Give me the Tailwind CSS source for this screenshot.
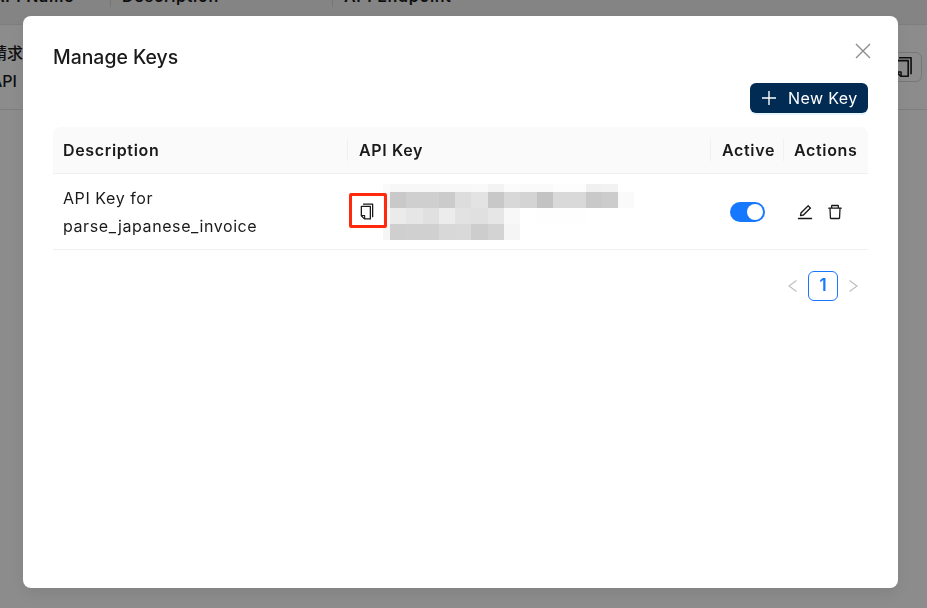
<!DOCTYPE html>
<html lang="en">
<head>
    <meta charset="UTF-8">
    <title>Manage Keys</title>
    <script src="https://cdn.jsdelivr.net/npm/@tailwindcss/browser@4"></script>
</head>
<body class="bg-white font-['Inter','Noto_Sans_CJK_JP',sans-serif] text-[#1a1a1a] overflow-hidden">
    <!-- page behind the dialog -->
    <div class="h-[608px] overflow-hidden">
        <div class="flex items-center h-[58px] -mt-[33px] bg-[#f0f0f0] border-b border-[#e6e6e6] font-semibold text-base tracking-[0.7px]">
            <div class="w-[117px] shrink-0 -ml-[7px] whitespace-nowrap">API Name</div>
            <div class="w-px h-[22px] bg-[#d8d8d8]"></div>
            <div class="w-[221px] shrink-0 pl-[11px]">Description</div>
            <div class="w-px h-[22px] bg-[#d8d8d8]"></div>
            <div class="pl-[11px]">API Endpoint</div>
        </div>
        <div class="flex justify-between items-center h-[85px] border-b border-[#e6e6e6] text-base font-medium">
            <div class="-ml-[9px] leading-[28px]">
                <p>請求</p>
                <p>API</p>
            </div>
            <button class="w-[34px] h-[30px] mr-[5px] border border-[#d9d9d9] rounded-md flex items-center pl-[5px]">
                <svg class="w-[20px] h-[20px]" viewBox="64 64 896 896" fill="currentColor"><path d="M832 64H296c-4.400 0-8 3.600-8 8v56c0 4.400 3.600 8 8 8h496v688c0 4.400 3.600 8 8 8h56c4.400 0 8-3.600 8-8V96c0-17.700-14.300-32-32-32zM704 192H192c-17.700 0-32 14.300-32 32v530.700c0 8.500 3.400 16.600 9.400 22.600l173.300 173.300c2.200 2.200 4.700 4 7.400 5.500v1.900h4.200c3.500 1.300 7.200 2 11 2H704c17.700 0 32-14.300 32-32V224c0-17.700-14.300-32-32-32zM350 856.200L263.900 770H350v86.200zM664 888H414V746c0-22.100-17.900-40-40-40H232V264h432v624z"/></svg>
            </button>
        </div>
    </div>

    <!-- mask + dialog -->
    <div class="fixed inset-0 bg-black/45 flex justify-center items-start pt-4 pr-[6px]">
        <div class="relative w-[875px] h-[572px] bg-white rounded-lg shadow-[0_6px_16px_rgba(0,0,0,0.08)] px-[30px] pt-[28px]">
            <h2 class="text-[19.4px] font-[550] leading-[26px]">Manage Keys</h2>
            <button class="absolute top-[27px] right-[27px] w-4 h-4 text-[#8c8c8c]">
                <svg class="w-4 h-4" viewBox="0 0 16 16" fill="none" stroke="currentColor" stroke-width="1.4"><path d="M1 1l14 14M15 1L1 15"/></svg>
            </button>

            <div class="flex justify-end mt-[13px]">
                <button class="flex items-center h-[30px] w-[118px] pl-[11px] bg-[#012b52] text-white rounded-md text-base tracking-[0.4px] shadow-[0_2px_0_rgba(5,145,255,0.1)]">
                    <svg class="w-[16px] h-[16px] mr-[11px]" viewBox="0 0 16 16" fill="none" stroke="currentColor" stroke-width="1.4"><path d="M8 1v14M1 8h14"/></svg>
                    New Key
                </button>
            </div>

            <div class="mt-[14px] text-base">
                <div class="grid grid-cols-[294px_363px_73px_85px] h-[47px] bg-[#fafafa] rounded-t-lg border-b border-[#f0f0f0] font-semibold tracking-[0.65px]">
                    <div class="flex items-center pl-[10px]">Description</div>
                    <div class="flex items-center">
                        <div class="w-px h-[22px] bg-[#f0f0f0]"></div>
                        <span class="pl-[11px]">API Key</span>
                    </div>
                    <div class="flex items-center">
                        <div class="w-px h-[22px] bg-[#f0f0f0]"></div>
                        <span class="pl-[11px]">Active</span>
                    </div>
                    <div class="flex items-center">
                        <div class="w-px h-[22px] bg-[#f0f0f0]"></div>
                        <span class="pl-[10px]">Actions</span>
                    </div>
                </div>

                <div class="grid grid-cols-[294px_363px_73px_85px] h-[76px] border-b border-[#f0f0f0]">
                    <div class="flex flex-col justify-center pl-[10px] leading-[28px] tracking-[0.58px]">
                        <p>API Key for</p>
                        <p>parse_japanese_invoice</p>
                    </div>
                    <div class="relative flex items-start">
                        <svg class="w-[16px] h-[17px] ml-[12px] mt-[29px] shrink-0" viewBox="64 64 896 896" fill="currentColor"><path d="M832 64H296c-4.400 0-8 3.600-8 8v56c0 4.400 3.600 8 8 8h496v688c0 4.400 3.600 8 8 8h56c4.400 0 8-3.600 8-8V96c0-17.700-14.300-32-32-32zM704 192H192c-17.700 0-32 14.300-32 32v530.700c0 8.500 3.400 16.600 9.400 22.600l173.300 173.300c2.200 2.200 4.700 4 7.400 5.500v1.900h4.200c3.500 1.300 7.200 2 11 2H704c17.700 0 32-14.300 32-32V224c0-17.700-14.300-32-32-32zM350 856.200L263.900 770H350v86.200zM664 888H414V746c0-22.100-17.900-40-40-40H232V264h432v624z"/></svg>
                        <!-- blurred key -->
                        <div class="ml-[8px] mt-[10px] grid grid-cols-[7px_repeat(15,16.3px)] grid-rows-[8px_16px_16px_16px]">
                            <div class="bg-[#fafafa]"></div><div class="bg-[#f7f7f7]"></div><div class="bg-[#f7f7f7]"></div><div class="bg-[#f7f7f7]"></div><div class="bg-[#f8f8f8]"></div><div class="bg-[#f8f8f8]"></div><div class="bg-[#f9f9f9]"></div><div class="bg-[#f3f3f3]"></div><div class="bg-[#fbfbfb]"></div><div class="bg-[#fafafa]"></div><div class="bg-[#fafafa]"></div><div class="bg-[#fdfdfd]"></div><div class="bg-[#fdfdfd]"></div><div class="bg-[#f0f0f0]"></div><div class="bg-[#f2f2f2]"></div><div class="bg-white"></div>
                            <div class="bg-[#f6f6f6]"></div><div class="bg-[#c9c9c9]"></div><div class="bg-[#cfcfcf]"></div><div class="bg-[#cfcfcf]"></div><div class="bg-[#cbcbcb]"></div><div class="bg-[#dddddd]"></div><div class="bg-[#e3e3e3]"></div><div class="bg-[#c8c8c8]"></div><div class="bg-[#d8d8d8]"></div><div class="bg-[#d4d4d4]"></div><div class="bg-[#c3c3c3]"></div><div class="bg-[#d9d9d9]"></div><div class="bg-[#d9d9d9]"></div><div class="bg-[#c9c9c9]"></div><div class="bg-[#cccccc]"></div><div class="bg-[#fafafa]"></div>
                            <div class="bg-[#fbfbfb]"></div><div class="bg-[#ebebeb]"></div><div class="bg-[#e6e6e6]"></div><div class="bg-[#e0e0e0]"></div><div class="bg-[#ececec]"></div><div class="bg-[#e2e2e2]"></div><div class="bg-[#e0e0e0]"></div><div class="bg-[#e6e6e6]"></div><div class="bg-[#f8f8f8]"></div><div class="bg-white"></div><div class="bg-[#fefefe]"></div><div class="bg-[#fefefe]"></div><div class="bg-[#fefefe]"></div><div class="bg-white"></div><div class="bg-white"></div><div class="bg-white"></div>
                            <div class="bg-[#f6f6f6]"></div><div class="bg-[#cfcfcf]"></div><div class="bg-[#d0d0d0]"></div><div class="bg-[#d0d0d0]"></div><div class="bg-[#d8d8d8]"></div><div class="bg-[#d9d9d9]"></div><div class="bg-[#cdcdcd]"></div><div class="bg-[#d3d3d3]"></div><div class="bg-[#f5f5f5]"></div><div class="bg-white"></div><div class="bg-white"></div><div class="bg-white"></div><div class="bg-white"></div><div class="bg-white"></div><div class="bg-white"></div><div class="bg-white"></div>
                        </div>
                        <!-- red annotation box -->
                        <div class="absolute left-[2px] top-[19px] w-[38px] h-[35px] border-[3px] border-[#ff2a0e] rounded-[2px]"></div>
                    </div>
                    <div class="flex items-center justify-center pl-[2px]">
                        <div class="flex items-center justify-end w-[35px] h-[20px] rounded-full bg-[#1677ff] pr-[2px]">
                            <div class="w-4 h-4 rounded-full bg-white"></div>
                        </div>
                    </div>
                    <div class="flex items-center gap-[14px] pl-[14px]">
                        <svg class="w-[16px] h-[16px]" viewBox="64 64 896 896" fill="currentColor"><path d="M257.700 752c2 0 4-.2 6-.5L431.900 722c2-.4 3.900-1.300 5.300-2.800l423.900-423.900a9.960 9.960 0 0 0 0-14.100L694.900 114.900c-1.900-1.900-4.400-2.900-7.100-2.900s-5.200 1-7.100 2.900L256.800 538.800c-1.500 1.500-2.400 3.300-2.800 5.300l-29.500 168.200a33.500 33.500 0 0 0 9.400 29.800c6.600 6.400 14.900 9.900 23.800 9.900zm67.400-174.400L687.800 215l73.300 73.300-362.700 362.600-88.900 15.700 15.600-89zM880 836H144c-17.700 0-32 14.300-32 32v36c0 4.400 3.600 8 8 8h784c4.400 0 8-3.600 8-8v-36c0-17.700-14.300-32-32-32z"/></svg>
                        <svg class="w-[16px] h-[16px]" viewBox="64 64 896 896" fill="currentColor"><path d="M360 184h-8c4.400 0 8-3.600 8-8v8h304v-8c0 4.400 3.600 8 8 8h-8v72h72v-80c0-35.300-28.700-64-64-64H352c-35.300 0-64 28.700-64 64v80h72v-72zm504 72H160c-17.700 0-32 14.300-32 32v32c0 4.400 3.600 8 8 8h60.400l24.700 523c1.600 34.100 29.800 61 63.900 61h454c34.200 0 62.300-26.800 63.900-61l24.700-523H888c4.400 0 8-3.600 8-8v-32c0-17.700-14.300-32-32-32zM731.300 840H292.700l-24.200-512h487l-24.200 512z"/></svg>
                    </div>
                </div>

                <div class="flex justify-end items-center mt-[21px] pr-[10px] gap-[11px]">
                    <svg class="w-[9px] h-[12px] text-[#bfbfbf]" viewBox="0 0 9 12" fill="none" stroke="currentColor" stroke-width="1.2"><path d="M8.500 0.500L1 6L8.500 11.500"/></svg>
                    <div class="w-[30px] h-[30px] flex items-center justify-center border border-[#1677ff] rounded-md text-[#1677ff] text-[17px] font-semibold">1</div>
                    <svg class="w-[9px] h-[12px] text-[#bfbfbf]" viewBox="0 0 9 12" fill="none" stroke="currentColor" stroke-width="1.2"><path d="M0.500 0.500L8 6L0.500 11.500"/></svg>
                </div>
            </div>
        </div>
    </div>
</body>
</html>
